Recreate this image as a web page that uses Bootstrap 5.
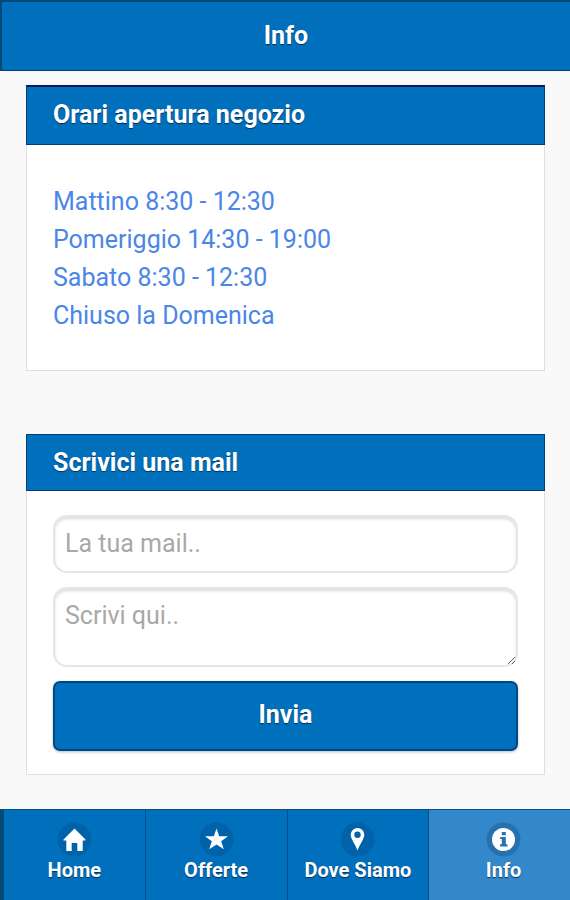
<!DOCTYPE html>
<html lang="it">
<head>
<meta charset="utf-8">
<meta name="viewport" content="width=device-width, initial-scale=1">
<title>Info</title>
<link href="https://cdn.jsdelivr.net/npm/bootstrap@5.3.0/dist/css/bootstrap.min.css" rel="stylesheet">
<style>
  :root { --brand: #0070bd; --brand-dark: #00407a; --edge: #044a78; }
  body { font-family: Roboto, "Liberation Sans", sans-serif; font-size: 25px; line-height: 38px; background: #f9f9f9; }
  .shaded { color: #fff; font-weight: 700; text-shadow: 0 1px 1px #00305c; }
  .app-header { background: var(--brand); border: solid var(--edge); border-width: 2px 0 1px 2px; border-bottom-color: #003f7c; padding: 15px 0; }
  .app-header h1, .panel-title { font-size: 25px; line-height: 38px; }
  .app-main { padding: 14px 25px 34px 26px; gap: 63px; }
  .panel { background: #fff; border: 1px solid #dfdfdf; border-top: 0; }
  .panel-title { background: var(--brand); border: 1px solid var(--brand-dark); border-top: 2px solid #001a66; padding: 9px 26px 10px; margin: 0 -1px; }
  .panel-title.compact { border-top: 1px solid var(--brand-dark); padding: 9px 26px 8px; }
  .hours { color: #4a86e8; padding: 38px 26px 35px; }
  .mail-form { padding: 24px 26px 23px; gap: 14px; }
  .mail-form .form-control { font-size: 25px; line-height: 30px; padding: 12px 10px; border: 2px solid #e6e6e6; border-radius: 14px; box-shadow: inset 0 2px 3px #dadada; background: #fff; }
  .mail-form .form-control::placeholder { color: #a8a8a8; }
  .mail-form textarea.form-control { height: 80px; min-height: 80px; resize: vertical; }
  .btn-send { font-size: 25px; line-height: 38px; padding: 13px 14px 15px; background: var(--brand); border: 2px solid #00478a; border-radius: 7px; box-shadow: 0 1px 3px #bbb; }
  .btn-send:hover { background: #0068b0; color: #fff; }
  .tabs { background: var(--brand); border-top: 1px solid #064d80; border-left: 4px solid var(--edge); }
  .tab { font-size: 20px; line-height: 26px; padding: 12px 0 17px; border-right: 1px solid #00508c; text-decoration: none; white-space: nowrap; }
  .tab.active { background: #3388cc; border-right: 0; }
  .tab.active > * { margin-left: 8px; }
  .tab svg { width: 35px; height: 35px; }
</style>
<script src="https://cdn.jsdelivr.net/npm/bootstrap@5.3.0/dist/js/bootstrap.bundle.min.js" defer></script>
</head>
<body class="d-flex flex-column min-vh-100">
<header class="app-header text-center">
  <h1 class="shaded m-0">Info</h1>
</header>
<main class="app-main d-flex flex-column flex-grow-1">
  <section class="panel">
    <h2 class="panel-title shaded mb-0">Orari apertura negozio</h2>
    <div class="hours">
      <div>Mattino 8:30 - 12:30</div>
      <div>Pomeriggio 14:30 - 19:00</div>
      <div>Sabato 8:30 - 12:30</div>
      <div>Chiuso la Domenica</div>
    </div>
  </section>
  <section class="panel">
    <h2 class="panel-title compact shaded mb-0">Scrivici una mail</h2>
    <form class="mail-form d-flex flex-column">
      <input type="email" class="form-control" placeholder="La tua mail.." aria-label="La tua mail">
      <textarea class="form-control" placeholder="Scrivi qui.." aria-label="Messaggio"></textarea>
      <button type="button" class="btn btn-send shaded w-100">Invia</button>
    </form>
  </section>
</main>
<nav class="tabs sticky-bottom">
  <div class="row g-0">
    <a href="#home" class="tab shaded col d-flex flex-column align-items-center">
      <svg viewBox="0 0 35 35" aria-hidden="true"><circle cx="17.500" cy="17.500" r="17" fill="#0062a8"/><path d="M17.500 6.500 6.500 17.500v1h2.800V29h5.400v-8h5.600v8h5.400V18.500h2.800v-1z" fill="#fff"/></svg>
      <span>Home</span>
    </a>
    <a href="#offerte" class="tab shaded col d-flex flex-column align-items-center">
      <svg viewBox="0 0 35 35" aria-hidden="true"><circle cx="17.500" cy="17.500" r="17" fill="#0062a8"/><path d="m17.500 6.500 2.700 7.800H29l-6.800 5 2.600 8-7.300-4.700-7.300 4.700 2.600-8-6.800-5h8.800z" fill="#fff"/></svg>
      <span>Offerte</span>
    </a>
    <a href="#dove" class="tab shaded col d-flex flex-column align-items-center">
      <svg viewBox="0 0 35 35" aria-hidden="true"><circle cx="17.500" cy="17.500" r="17" fill="#0062a8"/><path fill-rule="evenodd" d="M17.500 6a6.800 6.800 0 0 0-6.800 6.800c0 4 4.300 9.200 6.800 15.700 2.500-6.500 6.800-11.700 6.800-15.700A6.800 6.800 0 0 0 17.500 6zm0 3.600a3.200 3.200 0 1 1 0 6.400 3.200 3.200 0 0 1 0-6.400z" fill="#fff"/></svg>
      <span>Dove Siamo</span>
    </a>
    <a href="#info" class="tab active shaded col d-flex flex-column align-items-center" aria-current="page">
      <svg viewBox="0 0 35 35" aria-hidden="true"><circle cx="17.500" cy="17.500" r="17" fill="#2771af"/><circle cx="17.500" cy="17.500" r="11.500" fill="#fff"/><path d="M15.800 10h4v3.200h-4zM14.200 15h5.600v7.300h1.700v2.200h-7.500v-2.200h1.800v-5.200h-1.600z" fill="#2a72aa"/></svg>
      <span>Info</span>
    </a>
  </div>
</nav>
</body>
</html>
